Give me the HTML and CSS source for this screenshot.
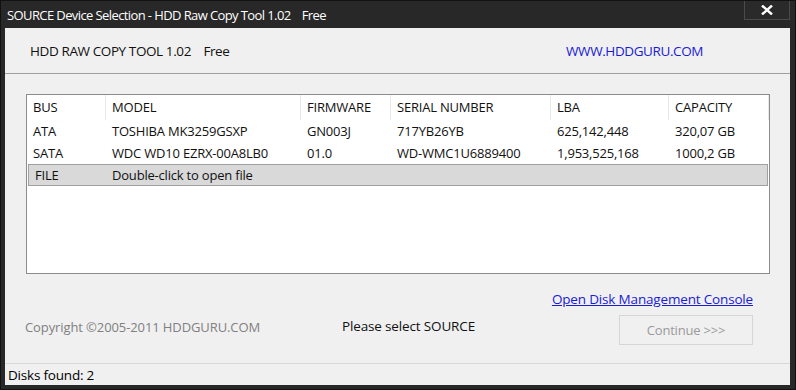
FILE: index.html
```html
<!DOCTYPE html>
<html lang="en">
<head>
  <meta charset="UTF-8" />
  <title>SOURCE Device Selection - HDD Raw Copy Tool 1.02 Free</title>
  <link rel="stylesheet" href="styles.css">
</head>
<body>
  <div class="window">
    <div class="titlebar">
      <span class="title">SOURCE Device Selection - HDD Raw Copy Tool 1.02&nbsp;&nbsp;&nbsp; Free</span>
      <div class="close">
        <svg width="14" height="10" viewBox="0 0 14 10"><path d="M2 0.5 L12 9.5 M12 0.5 L2 9.5" stroke="#fff" stroke-width="2.4"/></svg>
      </div>
    </div>
    <div class="client">
      <div class="header">
        <span class="app-name">HDD RAW COPY TOOL 1.02&nbsp;&nbsp;&nbsp; Free</span>
        <span class="site">WWW.HDDGURU.COM</span>
      </div>

      <div class="list">
        <div class="row head">
          <span>BUS</span><span>MODEL</span><span>FIRMWARE</span><span>SERIAL NUMBER</span><span>LBA</span><span>CAPACITY</span>
        </div>
        <div class="row">
          <span>ATA</span><span>TOSHIBA MK3259GSXP</span><span>GN003J</span><span>717YB26YB</span><span>625,142,448</span><span>320,07 GB</span>
        </div>
        <div class="row">
          <span>SATA</span><span>WDC WD10 EZRX-00A8LB0</span><span>01.0</span><span>WD-WMC1U6889400</span><span>1,953,525,168</span><span>1000,2 GB</span>
        </div>
        <div class="row selected">
          <span>FILE</span><span class="wide">Double-click to open file</span>
        </div>
      </div>

      <div class="bottom">
        <div class="link-row">
          <a href="#" class="console">Open Disk Management Console</a>
        </div>
        <div class="action-row">
          <span class="copyright">Copyright ©2005-2011 HDDGURU.COM</span>
          <span class="hint">Please select SOURCE</span>
          <button disabled>Continue &gt;&gt;&gt;</button>
        </div>
      </div>

      <div class="status">Disks found: 2</div>
    </div>
  </div>
</body>
</html>
```

FILE: styles.css
```css
body {
  margin: 0;
  padding: 0;
  background: #262626;
  font-family: 'Open Sans', 'Noto Sans', sans-serif;
  font-size: 13px;
}
.window {
  width: 796px;
  height: 390px;
  background: #282828;
  box-sizing: border-box;
  border: 1px solid #111;
  display: flex;
  flex-direction: column;
}
.titlebar {
  height: 27px;
  display: flex;
  align-items: flex-start;
  color: #fff;
  font-size: 13px;
}
.title {
  margin: 5px 0 0 6px;
  letter-spacing: -0.6px;
}
.close {
  margin-left: auto;
  margin-right: 5px;
  width: 44px;
  height: 18px;
  border: 1px solid #4a4a4a;
  border-top: none;
  background: #2a2a2a;
  display: flex;
  align-items: center;
  justify-content: center;
}
.client {
  flex: 1;
  margin: 0 5px 4px 4px;
  background: #f0f0f0;
  display: flex;
  flex-direction: column;
}
.header {
  height: 45px;
  border-bottom: 1px solid #a0a0a0;
  display: flex;
  align-items: center;
  padding: 0 0 0 25px;
  font-size: 13.5px;
  letter-spacing: -0.4px;
}
.app-name {
  color: #111;
  width: 536px;
}
.site {
  color: #1a1ad8;
}
.list {
  margin: 20px 20px 0 21px;
  height: 178px;
  background: #fff;
  border: 1px solid #8c8c8c;
  color: #111;
  letter-spacing: -0.2px;
}
.row {
  display: grid;
  grid-template-columns: 79px 195px 90px 160px 118px 1fr;
  height: 22px;
  align-items: center;
}
.row span {
  padding-left: 6px;
  white-space: nowrap;
}
.row.head {
  height: 25px;
}
.row.head span {
  height: 25px;
  line-height: 25px;
  border-right: 1px solid #e8e8e8;
}
.row.selected {
  background: #d9d9d9;
  border: 1px solid #a0a0a0;
  height: 20px;
  margin: 0 1px;
  grid-template-columns: 77px 1fr;
}
.bottom {
  flex: 1;
  padding: 0 37px 0 20px;
}
.link-row {
  display: flex;
  justify-content: flex-end;
  margin-top: 16px;
}
.console {
  color: #1a1ad8;
  text-decoration: underline;
  font-size: 13.5px;
  letter-spacing: -0.17px;
}
.action-row {
  display: flex;
  align-items: flex-start;
  margin-top: 7px;
}
.copyright {
  color: #808080;
  width: 317px;
  padding-top: 3px;
  letter-spacing: -0.1px;
}
.hint {
  color: #111;
  padding-top: 2px;
  font-size: 13.5px;
  letter-spacing: -0.15px;
}
button {
  margin-left: auto;
  width: 134px;
  height: 30px;
  background: #f0f0f0;
  border: 1px solid #d6d6d6;
  color: #9a9a9a;
  font-family: inherit;
  font-size: 13px;
  letter-spacing: -0.2px;
}
.status {
  height: 21px;
  border-top: 1px solid #d8d8d8;
  padding-left: 3px;
  display: flex;
  align-items: center;
  color: #000;
  font-size: 13.5px;
  letter-spacing: -0.2px;
}
```
